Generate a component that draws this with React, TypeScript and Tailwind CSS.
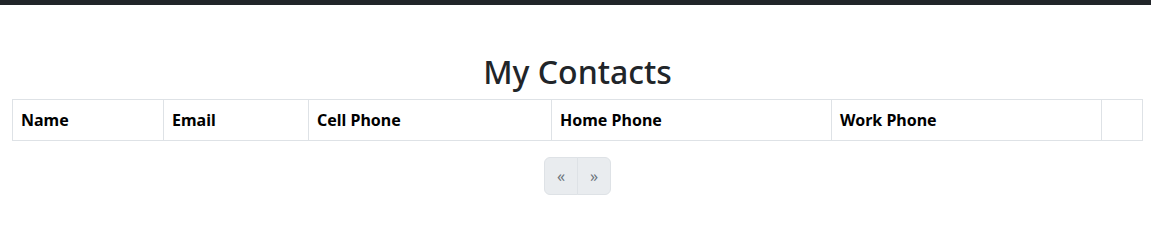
export default function App() {
  const cols = [
    { label: 'Name', w: 'w-[151px]' },
    { label: 'Email', w: 'w-[145px]' },
    { label: 'Cell Phone', w: 'w-[243px]' },
    { label: 'Home Phone', w: 'w-[280px]' },
    { label: 'Work Phone', w: 'w-[270px]' },
    { label: '', w: '' },
  ];

  return (
    <div className="min-h-[222px] bg-white font-['Noto_Sans',sans-serif] text-[#212529]">
      <div className="h-[5px] bg-[#212529]" />
      <div className="pl-3 pr-2">
        <h2 className="mt-12 mb-2 text-center text-[32px] leading-[1.2] font-medium">My Contacts</h2>
        <table className="w-full table-fixed border-collapse">
          <thead>
            <tr>
              {cols.map((c, i) => (
                <th
                  key={i}
                  className={`${c.w} border border-[#dee2e6] px-2 py-2 text-left text-base leading-6 font-bold text-black`}
                >
                  {c.label}
                </th>
              ))}
            </tr>
          </thead>
        </table>
        <div className="mt-4 flex justify-center">
          <ul className="flex">
            <li>
              <button className="h-[38px] w-[34px] rounded-l-md border border-[#dee2e6] bg-[#e9ecef] text-base leading-6 text-[#6c757d]">
                «
              </button>
            </li>
            <li>
              <button className="-ml-px h-[38px] w-[34px] rounded-r-md border border-[#dee2e6] bg-[#e9ecef] text-base leading-6 text-[#6c757d]">
                »
              </button>
            </li>
          </ul>
        </div>
      </div>
    </div>
  );
}
